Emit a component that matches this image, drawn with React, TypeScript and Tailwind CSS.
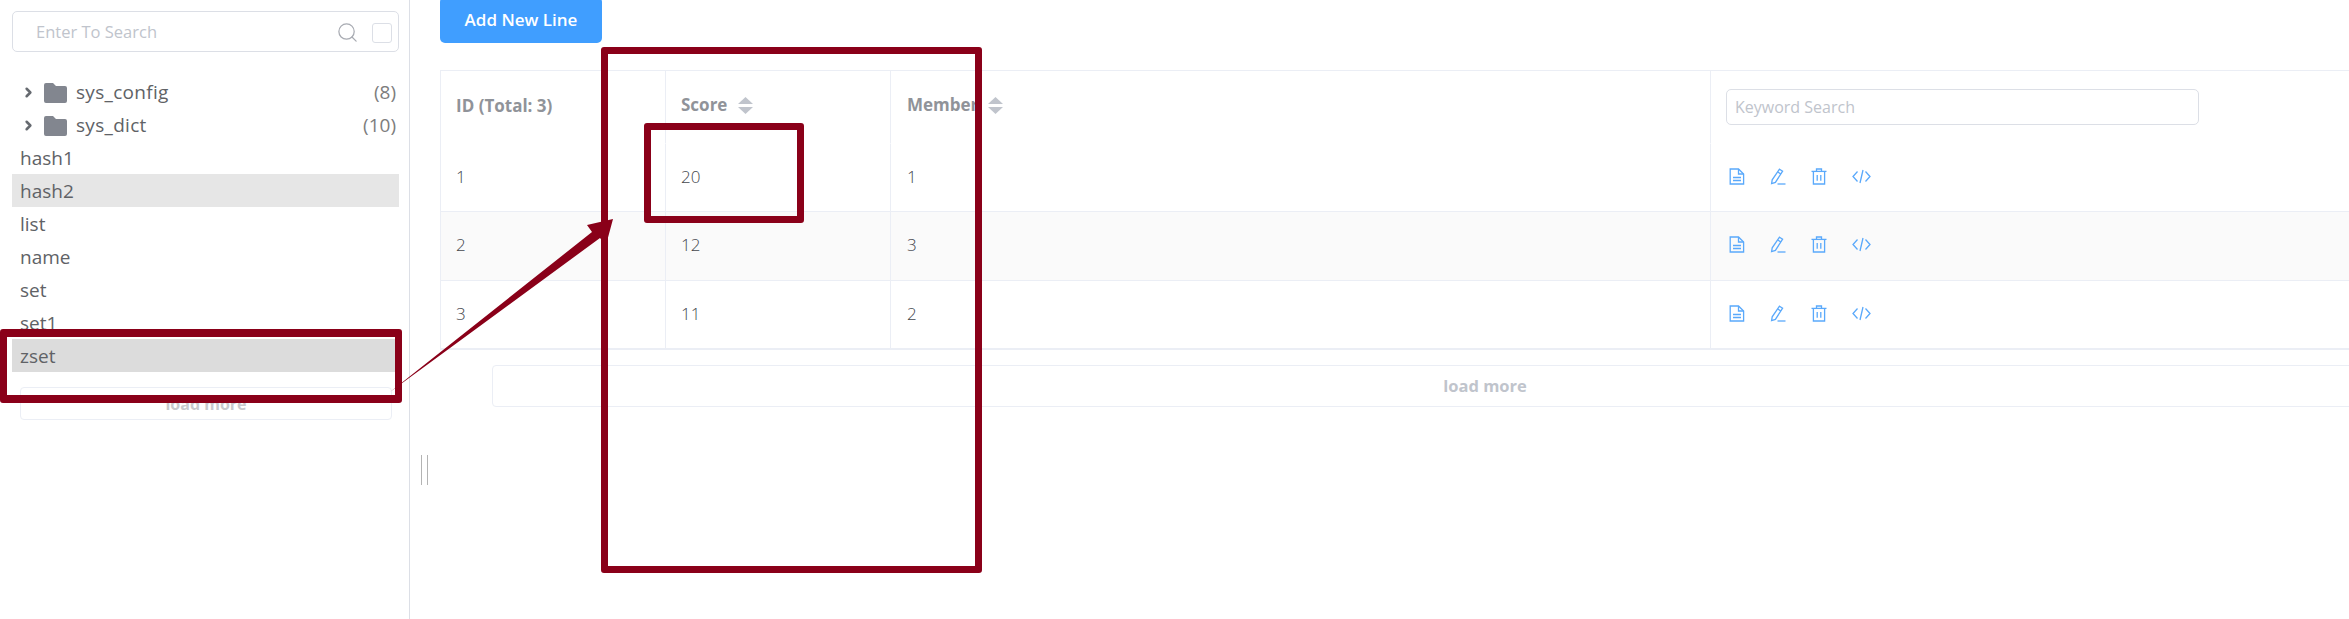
import React from 'react';
import { ChevronRight, Search } from 'lucide-react';

const folders = [
  { name: 'sys_config', count: 8 },
  { name: 'sys_dict', count: 10 },
];

const keys = ['hash1', 'hash2', 'list', 'name', 'set', 'set1', 'zset'];

const rows = [
  { id: 1, score: 20, member: 1 },
  { id: 2, score: 12, member: 3 },
  { id: 3, score: 11, member: 2 },
];

const font = "font-['Open_Sans','Noto_Sans',sans-serif]";

const keyRowClass = (name: string) => {
  if (name === 'hash2') return 'bg-[#e6e6e6]';
  if (name === 'zset') return 'bg-[#dcdcdc]';
  return '';
};

const SortCaret = () => (
  <svg width="15" height="17" viewBox="0 0 15 17" className="shrink-0" fill="#c0c4cc">
    <path d="M7.5 0 L15 7 H0 Z" />
    <path d="M0 10 H15 L7.5 17 Z" />
  </svg>
);

const DocIcon = () => (
  <svg width="16" height="17" viewBox="0 0 16 17" fill="none" stroke="#5aa9fb" strokeWidth="1.3">
    <path d="M1.2 1 H9.5 L14.6 6 V16 H1.2 Z" />
    <path d="M9.5 1 V6 H14.6" />
    <path d="M4 9.5 H12 M4 12.5 H12" />
  </svg>
);

const PenIcon = () => (
  <svg width="16" height="17" viewBox="0 0 16 17" fill="none" stroke="#5aa9fb" strokeWidth="1.3">
    <path d="M9.5 1.2 L12.6 3.2 L5.4 14.4 L1.6 15.6 L2.2 11.8 Z" />
    <path d="M7.8 4 L10.9 6" />
    <path d="M7.5 16 H15.5" />
  </svg>
);

const TrashIcon = () => (
  <svg width="16" height="17" viewBox="0 0 16 17" fill="none" stroke="#5aa9fb" strokeWidth="1.3">
    <path d="M0.5 3.4 H15.5" />
    <path d="M5.5 3.4 V1 H10.5 V3.4" />
    <path d="M2.4 3.4 V16 H13.6 V3.4" />
    <path d="M6.2 7 V12.8 M9.8 7 V12.8" />
  </svg>
);

const CodeIcon = () => (
  <svg width="19" height="15" viewBox="0 0 19 15" fill="none" stroke="#5aa9fb" strokeWidth="1.3">
    <path d="M5.5 2.5 L1 7.5 L5.5 12.5" />
    <path d="M13.5 2.5 L18 7.5 L13.5 12.5" />
    <path d="M11 1 L8 14" />
  </svg>
);

// red markup drawn on top of the screenshot
const Annotations = () => (
  <>
    <svg width="2349" height="619" className="absolute left-0 top-0 pointer-events-none">
      <polygon points="390,392 592,232 587,225 613,219 606,245 600,238" fill="#8a0019" />
    </svg>
    <div className="absolute left-0 top-[329px] w-[402px] h-[74px] rounded-[3px] border-x-[7px] border-y-[8px] border-[#8a0019]" />
    <div className="absolute left-[601px] top-[47px] w-[381px] h-[526px] rounded-[3px] border-[7px] border-[#8a0019]" />
    <div className="absolute left-[644px] top-[123px] w-[160px] h-[100px] rounded-[3px] border-[7px] border-[#8a0019]" />
  </>
);

const Sidebar = () => (
  <aside className="w-[410px] h-full shrink-0 border-r border-[#dcdfe6] pl-3 pr-[10px] pt-[11px]">
    <div className="flex items-center h-[41px] border border-[#dcdfe6] rounded-[5px] pl-[23px] pr-[6px] pt-[2px]">
      <input
        placeholder="Enter To Search"
        className="flex-1 min-w-0 outline-none bg-transparent text-[16.5px] text-[#606266] placeholder:text-[#c0c4cc]"
      />
      <Search className="w-[23px] h-[23px] text-[#a8abb2]" strokeWidth={1.3} />
      <div className="ml-[13px] w-5 h-5 border border-[#dcdfe6] rounded-[3px]" />
    </div>

    <ul className="mt-[23px] text-[19px] text-[#606266]">
      {folders.map((f) => (
        <li key={f.name} className="flex items-center h-[33px] pl-[9px] pr-[3px] pt-[2px]">
          <ChevronRight className="w-[15px] h-[15px] text-[#666a70]" strokeWidth={4} />
          <svg width="23" height="20" viewBox="0 0 23 20" className="ml-2" fill="#82868f">
            <path d="M2 0 H9 L12 3 H21 Q23 3 23 5 V18 Q23 20 21 20 H2 Q0 20 0 18 V2 Q0 0 2 0 Z" />
          </svg>
          <span className="ml-[9px] flex-1 tracking-[0.3px]">{f.name}</span>
          <span className="text-[#7d7d7d]">({f.count})</span>
        </li>
      ))}
      {keys.map((k) => (
        <li key={k} className={`flex items-center h-[33px] pl-2 pt-[2px] ${keyRowClass(k)}`}>
          {k}
        </li>
      ))}
    </ul>

    <button className="block mt-[15px] ml-2 w-[372px] h-[33px] border border-[#ebeef5] rounded-[4px] text-[16px] font-bold text-[#c8c9cc]">
      load more
    </button>
  </aside>
);

const Main = () => (
  <main className="flex-1 min-w-0 h-full overflow-hidden pl-3">
    <div className="pl-[18px]">
      <button className="block mt-[-3px] w-[162px] h-[46px] rounded-[5px] bg-[#409eff] text-white text-[17px] font-semibold">
        Add New Line
      </button>

      <div className="mt-[27px] w-[2090px] border-t border-l border-[#ebeef5]">
        <table className="table-fixed border-separate border-spacing-0 w-full text-[17px] text-[#606266]">
          <colgroup>
            <col className="w-[225px]" />
            <col className="w-[225px]" />
            <col className="w-[820px]" />
            <col />
          </colgroup>
          <thead>
            <tr className="h-[73px] text-left text-[#909399] font-bold">
              <th className="pl-[15px] pb-[2px] border-r border-b border-r-[#ebeef5] border-b-white">ID (Total: 3)</th>
              <th className="pl-[15px] pb-1 border-r border-b border-r-[#ebeef5] border-b-white">
                <div className="flex items-center gap-[11px]">Score <SortCaret /></div>
              </th>
              <th className="pl-4 pb-1 border-r border-b border-r-[#ebeef5] border-b-white">
                <div className="flex items-center gap-[10px]">Member <SortCaret /></div>
              </th>
              <th className="pl-[15px] pb-[2px] font-normal">
                <input
                  placeholder="Keyword Search"
                  className="block w-[473px] h-9 border border-[#dcdfe6] rounded-[5px] px-2 outline-none text-[16px] placeholder:text-[#c0c4cc]"
                />
              </th>
            </tr>
          </thead>
          <tbody className="font-light text-[#44474d]">
            {rows.map((r, i) => (
              <tr key={r.id} className={`${i === 0 ? 'h-[68px]' : 'h-[69px]'} ${i === 1 ? 'bg-[#fafafa]' : ''}`}>
                <td className={`pl-[15px] pb-[2px] border-r border-[#ebeef5] ${i === 2 ? 'border-b-2' : 'border-b'}`}>{r.id}</td>
                <td className={`pl-[15px] pb-[2px] border-r border-[#ebeef5] ${i === 2 ? 'border-b-2' : 'border-b'}`}>{r.score}</td>
                <td className={`pl-4 pb-[2px] border-r border-[#ebeef5] ${i === 2 ? 'border-b-2' : 'border-b'}`}>{r.member}</td>
                <td className={`pl-[18px] border-[#ebeef5] ${i === 2 ? 'border-b-2' : 'border-b'}`}>
                  <div className="flex items-center gap-[25px] -mt-[3px]">
                    <DocIcon />
                    <PenIcon />
                    <TrashIcon />
                    <CodeIcon />
                  </div>
                </td>
              </tr>
            ))}
          </tbody>
        </table>
      </div>

      <button className="block mt-[15px] ml-[52px] w-[1986px] h-[42px] border border-[#ebeef5] rounded-[4px] text-[16.5px] font-bold text-[#c0c4cc]">
        load more
      </button>
    </div>

    <div className="mt-12 -ml-px w-[7px] h-[30px] border-x border-[#b4b4b4]" />
  </main>
);

export default function App() {
  return (
    <div className={`relative flex w-screen h-screen overflow-hidden bg-white ${font}`}>
      <Sidebar />
      <Main />
      <Annotations />
    </div>
  );
}
